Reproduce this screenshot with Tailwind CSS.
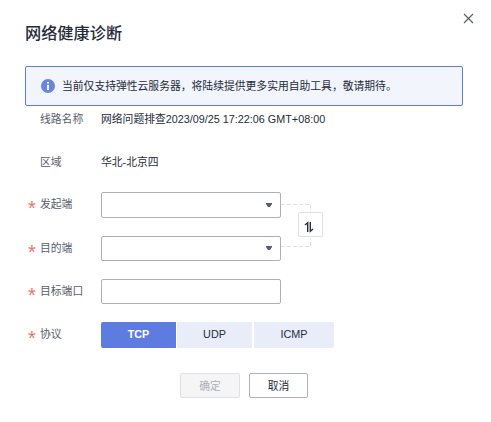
<!DOCTYPE html>
<html lang="zh-CN">
<head>
<meta charset="utf-8">
<title>网络健康诊断</title>
<script src="https://cdn.jsdelivr.net/npm/@tailwindcss/browser@4"></script>
</head>
<body class="bg-white">
<main class="relative h-[422px] w-[491px] overflow-hidden bg-white pl-[25px] pt-[21px] font-['Liberation_Sans','Noto_Sans_CJK_SC',sans-serif] text-[10.8px] leading-4 text-[#252b3a]">
  <button class="absolute left-[463px] top-[13px]" aria-label="关闭">
    <svg class="block" width="11" height="11" viewBox="0 0 11 11" fill="none" stroke="#575d6c" stroke-width="1.2"><path d="M1 1l9 9M10 1l-9 9"/></svg>
  </button>
  <h1 class="h-6 text-[16.2px] leading-6 font-medium">网络健康诊断</h1>

  <div class="mt-[21px] flex h-[40px] w-[438px] items-center rounded-[2px] border border-[#5e7ce0] bg-[#f2f5fc] pl-[15px]">
    <svg class="block shrink-0" width="14" height="14" viewBox="0 0 14 14"><circle cx="7" cy="7" r="7" fill="#6b85dd"/><path d="M6.1 2.9h1.8v1.7H6.1zM6.1 5.7h1.8v5.2H6.1z" fill="#fff"/></svg>
    <span class="ml-[7px]">当前仅支持弹性云服务器，将陆续提供更多实用自助工具，敬请期待。</span>
  </div>

  <div class="flex h-[25px] items-center pl-[15px]"><span class="w-[61px] text-[#575d6c]">线路名称</span><span>网络问题排查2023/09/25 17:22:06 GMT+08:00</span></div>
  <div class="mt-[18px] flex h-[25px] items-center pl-[15px]"><span class="w-[61px] text-[#575d6c]">区域</span><span class="pt-px">华北-北京四</span></div>

  <div class="mt-[18px] flex">
    <div>
      <div class="flex h-[26px]">
        <span class="w-[15px] pl-[3px] pt-[6px] text-[20px] leading-none text-[#f66f6a]">*</span><span class="w-[61px] pt-[4px] text-[#575d6c]">发起端</span>
        <div class="flex w-[180px] items-center justify-end rounded-[2px] border border-[#adb0b8] pr-2"><svg width="6" height="4" viewBox="0 0 6 4"><path d="M0 0h6v1L4 4H2L0 1z" fill="#575d6c"/></svg></div>
      </div>
      <div class="mt-[18px] flex h-[25px]">
        <span class="w-[15px] pl-[3px] pt-[6px] text-[20px] leading-none text-[#f66f6a]">*</span><span class="w-[61px] pt-[4px] text-[#575d6c]">目的端</span>
        <div class="flex w-[180px] items-center justify-end rounded-[2px] border border-[#adb0b8] pr-2 pb-px"><svg width="6" height="4" viewBox="0 0 6 4"><path d="M0 0h6v1L4 4H2L0 1z" fill="#575d6c"/></svg></div>
      </div>
    </div>
    <div class="relative h-[69px] w-[42px]">
      <svg class="block" width="42" height="69" viewBox="0 0 42 69" fill="none" stroke="#dfe1e6" stroke-dasharray="4 2"><path d="M0 12.5h29.5v8M0 54.5h29.5v-8"/></svg>
      <button class="absolute left-[17px] top-[20px] flex h-[25px] w-[25px] items-center justify-center rounded-[2px] border border-[#dfe1e6] bg-white" aria-label="交换">
        <svg class="mt-[5px] -ml-[3px]" width="10" height="12" viewBox="0 0 10 12" fill="none" stroke="#252b3a" stroke-width="1.4"><path d="M1 4L3.7 1.8V11M6.3 1v9.2L9 8"/></svg>
      </button>
    </div>
  </div>

  <div class="mt-[18px] flex h-[25px]">
    <span class="w-[15px] pl-[3px] pt-[6px] text-[20px] leading-none text-[#f66f6a]">*</span><span class="w-[61px] pt-[4px] text-[#575d6c]">目标端口</span>
    <div class="w-[180px] rounded-[2px] border border-[#adb0b8]"></div>
  </div>
  <div class="mt-[18px] flex h-[26px]">
    <span class="w-[15px] pl-[3px] pt-[6px] text-[20px] leading-none text-[#f66f6a]">*</span><span class="w-[61px] pt-[4px] text-[#575d6c]">协议</span>
    <button class="w-[75px] rounded-l-[2px] bg-[#5e7ce0] pb-[3px] font-bold text-white">TCP</button>
    <button class="ml-px w-[75px] bg-[#e9edfa] pb-[3px]">UDP</button>
    <button class="ml-[2px] w-[80px] rounded-r-[2px] bg-[#e9edfa] pb-[3px]">ICMP</button>
  </div>

  <div class="mt-[25px] flex h-[25px] gap-[9px] pl-[155px]">
    <button class="w-[60px] rounded-[2px] border border-[#dfe1e6] bg-[#f5f5f6] text-[#adb0b8]">确定</button>
    <button class="w-[59px] rounded-[2px] border border-[#adb0b8] bg-white">取消</button>
  </div>
</main>
</body>
</html>
